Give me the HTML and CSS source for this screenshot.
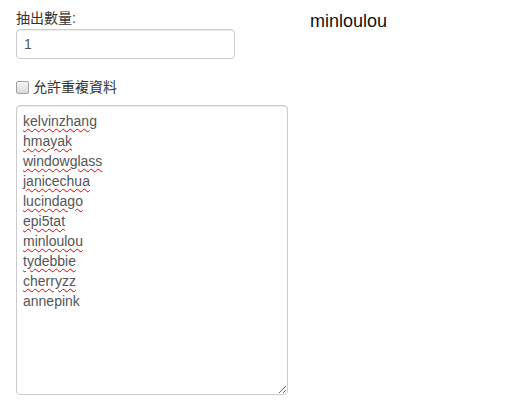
FILE: index.html
```html
<!DOCTYPE html>
<html>
<head>
<meta charset="utf-8">
<link rel="stylesheet" href="styles.css">
</head>
<body>
<div class="page">
  <div class="left">
    <label class="lbl">抽出數量:</label>
    <div class="input">1</div>
    <div class="check">
      <span class="box"></span>
      <span class="check-text">允許重複資料</span>
    </div>
    <div class="textarea">
      <div class="line"><span class="sp">kelvinzhang</span></div>
      <div class="line"><span class="sp">hmayak</span></div>
      <div class="line"><span class="sp">windowglass</span></div>
      <div class="line"><span class="sp">janicechua</span></div>
      <div class="line"><span class="sp">lucindago</span></div>
      <div class="line"><span class="sp">epi5tat</span></div>
      <div class="line"><span class="sp">minloulou</span></div>
      <div class="line"><span class="sp">tydebbie</span></div>
      <div class="line"><span class="sp">cherryzz</span></div>
      <div class="line">annepink</div>
    </div>
  </div>
  <div class="right">
    <div class="result">minloulou</div>
  </div>
</div>
</body>
</html>
```
FILE: styles.css
```css
html, body {
  margin: 0;
  padding: 0;
  background: #fff;
}
body {
  font-family: "Liberation Sans", Arial, "Noto Sans CJK TC", sans-serif;
  font-size: 14px;
  color: #333;
}
.page {
  display: flex;
  padding: 8px 16px 0 16px;
}
.left {
  width: 272px;
  display: flex;
  flex-direction: column;
}
.lbl {
  display: block;
  line-height: 20px;
  margin-bottom: 1px;
  color: #333;
}
.input {
  width: 219px;
  height: 30px;
  box-sizing: border-box;
  border: 1px solid #ccc;
  border-radius: 4px;
  padding: 5px 7px;
  line-height: 18px;
  color: #555;
  box-shadow: inset 0 1px 1px rgba(0,0,0,0.075);
}
.check {
  display: flex;
  align-items: center;
  margin-top: 19px;
  height: 18px;
}
.box {
  width: 11px;
  height: 11px;
  border: 1px solid #a0a0a0;
  border-radius: 2px;
  background: linear-gradient(#f4f4f4, #dcdcdc);
  margin-right: 4px;
  margin-left: 0;
}
.check-text {
  line-height: 18px;
  color: #333;
}
.textarea {
  margin-top: 9px;
  width: 272px;
  height: 290px;
  box-sizing: border-box;
  border: 1px solid #ccc;
  border-radius: 4px;
  padding: 5px 6px;
  color: #555;
  line-height: 20px;
  resize: both;
  overflow: auto;
  box-shadow: inset 0 1px 1px rgba(0,0,0,0.075);
}
.sp {
  text-decoration: underline wavy #e00;
  text-decoration-thickness: 1px;
  text-underline-offset: 2px;
}
.right {
  padding-left: 22px;
}
.result {
  font-size: 18px;
  line-height: 22px;
  margin-top: 2px;
  color: #111;
}
```
